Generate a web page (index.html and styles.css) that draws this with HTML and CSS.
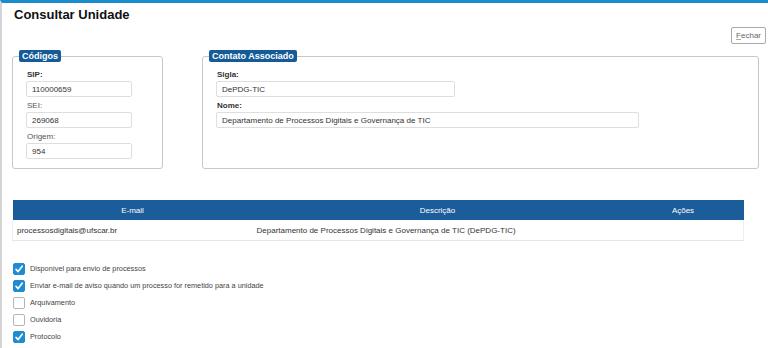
FILE: index.html
```html
<!DOCTYPE html>
<html>
<head>
    <title>Consultar Unidade</title>
    <link rel="stylesheet" href="styles.css">
</head>
<body>
    <div class="pagina">
        <h1 class="titulo">Consultar Unidade</h1>

        <div class="barra-botoes">
            <button type="button" class="botao"><u>F</u>echar</button>
        </div>

        <div class="linha-campos">
            <fieldset class="grupo grupo-codigos">
                <legend>Códigos</legend>
                <label class="rotulo obrigatorio" for="txtSip">SIP:</label>
                <input type="text" id="txtSip" class="campo campo-curto" value="110000659" readonly>
                <label class="rotulo" for="txtSei">SEI:</label>
                <input type="text" id="txtSei" class="campo campo-curto" value="269068" readonly>
                <label class="rotulo" for="txtOrigem">Origem:</label>
                <input type="text" id="txtOrigem" class="campo campo-curto" value="954" readonly>
            </fieldset>

            <fieldset class="grupo grupo-contato">
                <legend>Contato Associado</legend>
                <label class="rotulo obrigatorio" for="txtSigla">Sigla:</label>
                <input type="text" id="txtSigla" class="campo campo-sigla" value="DePDG-TIC" readonly>
                <label class="rotulo obrigatorio" for="txtNome">Nome:</label>
                <input type="text" id="txtNome" class="campo campo-nome" value="Departamento de Processos Digitais e Governança de TIC" readonly>
            </fieldset>
        </div>

        <table class="tabela">
            <thead>
                <tr>
                    <th class="col-email">E-mail</th>
                    <th class="col-descricao">Descrição</th>
                    <th class="col-acoes">Ações</th>
                </tr>
            </thead>
            <tbody>
                <tr>
                    <td>processosdigitais@ufscar.br</td>
                    <td>Departamento de Processos Digitais e Governança de TIC (DePDG-TIC)</td>
                    <td></td>
                </tr>
            </tbody>
        </table>

        <div class="opcoes">
            <div class="opcao">
                <span class="caixa marcada"><svg viewBox="0 0 12 12" width="12" height="12"><path d="M3 6.4 L5.1 8.6 L9.2 3.2" fill="none" stroke="#fff" stroke-width="1.6" stroke-linecap="round" stroke-linejoin="round"/></svg></span>
                <span class="texto-opcao">Disponível para envio de processos</span>
            </div>
            <div class="opcao">
                <span class="caixa marcada"><svg viewBox="0 0 12 12" width="12" height="12"><path d="M3 6.4 L5.1 8.6 L9.2 3.2" fill="none" stroke="#fff" stroke-width="1.6" stroke-linecap="round" stroke-linejoin="round"/></svg></span>
                <span class="texto-opcao">Enviar e-mail de aviso quando um processo for remetido para a unidade</span>
            </div>
            <div class="opcao">
                <span class="caixa"></span>
                <span class="texto-opcao">Arquivamento</span>
            </div>
            <div class="opcao">
                <span class="caixa"></span>
                <span class="texto-opcao">Ouvidoria</span>
            </div>
            <div class="opcao">
                <span class="caixa marcada"><svg viewBox="0 0 12 12" width="12" height="12"><path d="M3 6.4 L5.1 8.6 L9.2 3.2" fill="none" stroke="#fff" stroke-width="1.6" stroke-linecap="round" stroke-linejoin="round"/></svg></span>
                <span class="texto-opcao">Protocolo</span>
            </div>
        </div>
    </div>
</body>
</html>
```

FILE: styles.css
```css
/* CSS da tela de consulta */
body {
    margin: 0;
    font-family: "Liberation Sans", Arial, sans-serif;
    font-size: 8px;
    color: #333;
    background-color: #fff;
}

.pagina {
    min-height: 345px;
    border-top: 3px solid #1b8dce;
    border-left: 2px solid #d4d4d4;
    padding: 0 2px 0 10px;
}

.titulo {
    margin: 4px 0 0 2px;
    font-size: 13px;
    line-height: 16px;
    color: #111;
}

.barra-botoes {
    display: flex;
    justify-content: flex-end;
    margin-top: 4px;
}

.botao {
    height: 17px;
    padding: 0 4px;
    font-family: inherit;
    font-size: 8px;
    color: #666;
    background-color: #fff;
    border: 1px solid #aaa;
    border-radius: 2px;
}

.botao u {
    text-decoration-color: #aaa;
}

.linha-campos {
    display: flex;
    align-items: stretch;
    gap: 39px;
    margin-top: 6px;
}

.grupo {
    margin: 0;
    padding: 4px 0 9px 14px;
    border: 1px solid #c8c8c8;
    border-radius: 3px;
    display: flex;
    flex-direction: column;
    align-items: flex-start;
}

.grupo legend {
    margin-left: -8px;
    padding: 0 3px;
    height: 12px;
    line-height: 12px;
    font-size: 9px;
    font-weight: bold;
    color: #fff;
    background-color: #155b98;
    border-radius: 2px;
}

.grupo-codigos {
    width: 135px;
}

.grupo-contato {
    width: 541px;
}

.rotulo {
    display: block;
    line-height: 12px;
    margin-top: 3px;
    color: #555;
}

.rotulo.obrigatorio {
    font-weight: bold;
    color: #333;
}

.campo {
    box-sizing: border-box;
    height: 16px;
    margin: 0 0 0 -1px;
    padding: 0 5px;
    font-family: inherit;
    font-size: 8px;
    color: #333;
    border: 1px solid #dedede;
    border-radius: 2px;
}

.campo-curto {
    width: 106px;
}

.campo-sigla {
    width: 239px;
}

.campo-nome {
    width: 423px;
}

.tabela {
    width: 732px;
    margin-top: 31px;
    border-collapse: collapse;
}

.tabela th {
    height: 20px;
    padding: 0;
    font-weight: normal;
    color: #fff;
    background-color: #1b5c9a;
}

.tabela td {
    height: 20px;
    padding: 0 4px;
    border-bottom: 1px solid #e6e6e6;
}

.tabela td:first-child {
    border-left: 1px solid #eee;
}

.tabela td:last-child {
    border-right: 1px solid #eee;
}

.col-email {
    width: 240px;
}

.col-descricao {
    width: 370px;
}

.opcoes {
    margin-top: 19px;
    margin-left: 1px;
}

.opcao {
    display: flex;
    align-items: center;
    gap: 5px;
    height: 17px;
}

.caixa {
    box-sizing: border-box;
    width: 12px;
    height: 12px;
    border: 1px solid #b5b5b5;
    border-radius: 2px;
    background-color: #fff;
    display: flex;
}

.caixa.marcada {
    border-color: #1e8cd0;
    background-color: #1e8cd0;
}

.caixa svg {
    margin: -1px;
}

.texto-opcao {
    font-size: 7.3px;
    color: #444;
}
```
